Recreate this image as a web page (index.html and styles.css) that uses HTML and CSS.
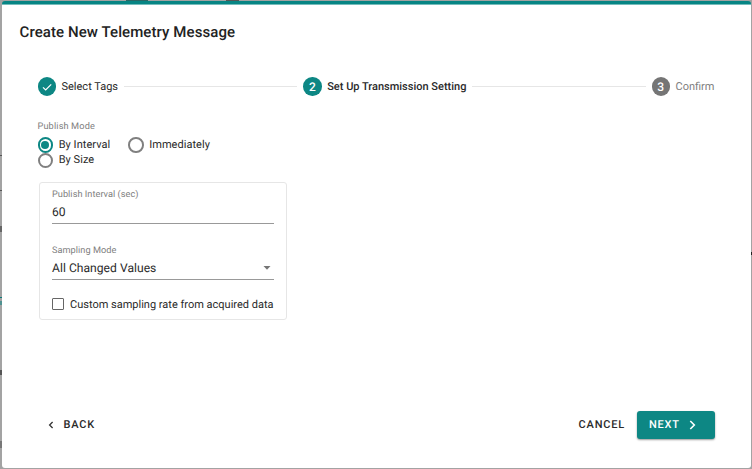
FILE: index.html
```html
<!DOCTYPE html>
<html lang="en">
<head>
<meta charset="utf-8">
<title>Create New Telemetry Message</title>
<link rel="stylesheet" href="styles.css">
</head>
<body>
<div class="marks"><i class="m1"></i><i class="m2"></i><i class="m3"></i><i class="m4"></i><i class="m5"></i><i class="m6"></i><i class="m7"></i><i class="m8"></i><i class="m9"></i><i class="m10"></i></div>
<main class="dialog">
  <h1><span>Create New Telemetry Message</span></h1>
  <div class="stepper">
    <div class="step done"><span class="dot"><svg width="18" height="18" viewBox="0 0 18 18"><path d="M5 9.3l2.7 2.7 5.5-5.7" fill="none" stroke="#fff" stroke-width="1.2"/></svg></span><span class="label">Select Tags</span></div>
    <div class="line"></div>
    <div class="step active"><span class="dot">2</span><span class="label">Set Up Transmission Setting</span></div>
    <div class="line"></div>
    <div class="step pending"><span class="dot">3</span><span class="label">Confirm</span></div>
  </div>
  <div class="mode"><span class="caption">Publish Mode</span></div>
  <div class="radios">
    <label class="radio on"><i></i><span>By Interval</span></label>
    <label class="radio"><i></i><span>Immediately</span></label>
    <label class="radio"><i></i><span>By Size</span></label>
  </div>
  <section class="card">
    <div class="field">
      <div class="cap"><span class="caption">Publish Interval (sec)</span></div>
      <div class="value"><span>60</span></div>
    </div>
    <div class="field second">
      <div class="cap"><span class="caption">Sampling Mode</span></div>
      <div class="value"><span>All Changed Values</span><svg width="8" height="4" viewBox="0 0 8 4"><path d="M.5 0h7L4 3.8z" fill="#757575"/></svg></div>
    </div>
    <label class="check"><i></i><span>Custom sampling rate from acquired data</span></label>
  </section>
  <footer>
    <div class="back"><svg width="6" height="8" viewBox="0 0 6 8"><path d="M4.6 1L1.6 4l3 3" fill="none" stroke="#333" stroke-width="1.3"/></svg><span>BACK</span></div>
    <div class="cancel"><span>CANCEL</span></div>
    <div class="next"><span>NEXT</span><svg width="7" height="10" viewBox="0 0 7 10"><path d="M1.3 1L5.3 5l-4 4" fill="none" stroke="#fff" stroke-width="1.6"/></svg></div>
  </footer>
</main>
</body>
</html>
```
FILE: styles.css
```css
* { box-sizing: border-box; }
body { margin: 0; width: 752px; height: 469px; overflow: hidden; background: #a3a3a3; font-family: Roboto, sans-serif; color: #2a2a2a; padding: 1px 1px 1px 1.5px; text-rendering: geometricPrecision; }
.marks i { position: absolute; left: 0; width: 2px; height: 1px; background: #555; }
.marks .m1 { top: 155px; }
.marks .m2 { top: 190px; }
.marks .m3 { top: 226px; height: 6px; background: #666; }
.marks .m4 { top: 297px; background: #087b7a; }
.marks .m5 { top: 301px; height: 4px; background: #4f9291; }
.marks .m6 { top: 370px; height: 5px; }
.marks .m7 { top: 441px; height: 7px; background: #777; }
.marks .m8 { left: 751px; top: 252px; height: 3px; background: #222; }
.marks .m9 { left: 126px; top: 0; width: 22px; background: #2b6665; }
.marks .m10 { left: 226px; top: 0; width: 13px; }
.dialog { position: relative; height: 467px; background: #fff; border-top: 3px solid #078584; border-radius: 3px; display: flex; flex-direction: column; }
.dialog::before { content: ""; height: 1px; flex: none; background: #75bcbb; }
h1 { margin: 17px 0 0 18px; font-size: 15px; line-height: 20px; height: 20px; font-weight: 500; letter-spacing: .09px; color: #222; }
.stepper { display: flex; align-items: center; margin: 34.5px 36.5px 0 36px; height: 20px; }
.step { display: flex; align-items: center; font-size: 11px; }
.dot { width: 18.5px; height: 18.5px; border-radius: 50%; background: #0d8784; color: #fff; display: flex; align-items: center; justify-content: center; font-size: 12px; font-weight: 500; margin-right: 5.5px; }
.label { line-height: 14px; }
.active .label { font-weight: 500; }
.pending { color: #808080; }
.pending .dot { background: #757575; }
.line { flex: 1; height: 1px; background: #e6e6e6; margin: 0 6px; }
.caption { font-size: 9.2px; letter-spacing: .03px; color: #808080; }
.mode { height: 14px; line-height: 14px; margin: 23.5px 0 0 36px; display: flex; }
.mode .caption { letter-spacing: .13px; }
.radios { margin: 3px 0 0 36px; width: 250px; display: grid; grid-template-columns: 90.5px auto; grid-auto-rows: 15.5px; }
.radio { display: flex; align-items: center; gap: 6px; font-size: 11px; line-height: 14px; letter-spacing: .04px; }
.radio i { width: 15.5px; height: 15.5px; border: 2px solid #808080; border-radius: 50%; flex: none; display: grid; place-items: center; margin-right: -.3px; }
.radio.on i { border-color: #0d8784; }
.radio.on i::after { content: ""; width: 8px; height: 8px; border-radius: 50%; background: #0d8784; }
.card { width: 248px; height: 138px; margin: 14px 0 0 37.5px; border: 1px solid #e6e6e6; border-radius: 3px; padding: 5px 12px 0; }
.field { height: 36px; border-bottom: 1px solid #999; }
.second { margin-top: 20px; }
.cap { height: 14px; line-height: 14px; display: flex; }
.value { height: 20px; line-height: 20px; font-size: 12.1px; display: flex; justify-content: space-between; align-items: center; letter-spacing: .03px; }
.value svg { margin: 0 3px 0 0; }
.check { display: flex; align-items: center; height: 18px; margin-top: 15px; font-size: 11px; white-space: nowrap; }
.check i { width: 12px; height: 12px; border: 1.5px solid #666; border-radius: 1px; margin-right: 6px; flex: none; }
footer { display: flex; align-items: center; height: 28px; margin: auto 36.5px 29.5px 46px; font-size: 11px; font-weight: 500; letter-spacing: .8px; }
.back { display: flex; align-items: center; gap: 10px; flex: 1; }
.cancel { margin-right: 12px; }
.next { width: 77.5px; height: 28px; border-radius: 3px; background: #0d8784; color: #fff; display: flex; align-items: center; padding-left: 12px; gap: 9.5px; box-shadow: 0 1px 2px #0006; }
```
